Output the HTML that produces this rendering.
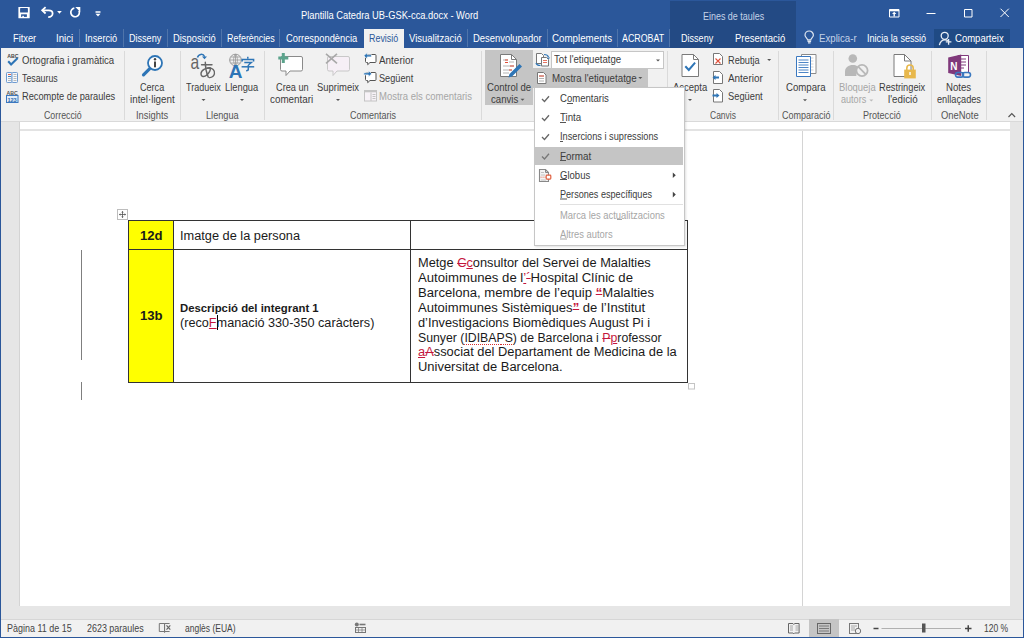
<!DOCTYPE html>
<html><head><meta charset="utf-8"><style>
html,body{margin:0;padding:0;width:1024px;height:638px;overflow:hidden;background:#e6e6e6;}
body{position:relative;font-family:"Liberation Sans",sans-serif;}
div,span,svg{position:absolute;box-sizing:border-box;}
#tx>span,#tx2>span{white-space:pre;transform-origin:0 0;}
.ins{position:static;color:#c4163c;text-decoration:underline;text-decoration-thickness:1px;text-underline-offset:1px}
.del{position:static;color:#c4163c;text-decoration:line-through;text-decoration-thickness:1px}
.sp{position:static;background:repeating-linear-gradient(90deg,#d83030 0 1px,transparent 1px 2px) 0 100%/100% 1px no-repeat}
</style></head><body>
<!-- title bar -->
<div style="left:0;top:0;width:1024px;height:48px;background:#2b579a"></div>
<div style="left:670px;top:1px;width:126px;height:47px;background:#234a84"></div>
<div style="left:934px;top:29px;width:76px;height:19px;background:#1f4a84"></div>
<div style="left:364px;top:29px;width:40px;height:19px;background:#f1f1f1"></div>
<!-- ribbon -->
<div style="left:1px;top:48px;width:1022px;height:73px;background:#f1f1f1"></div>
<div style="left:1px;top:121px;width:1022px;height:1px;background:#d9d9d9"></div>
<!-- page -->
<div style="left:19px;top:122px;width:991px;height:484px;background:#ffffff;border-left:1px solid #d4d4d4"></div>
<div style="left:20px;top:129px;width:990px;height:2px;background:#e3e3e3"></div>
<div style="left:802px;top:131px;width:1px;height:475px;background:#d4d4d4"></div>
<!-- status bar -->
<div style="left:1px;top:619px;width:1022px;height:18px;background:#f1f1f1;border-top:1px solid #d6d6d6"></div>
<div style="left:0;top:0;width:1px;height:638px;background:#2b579a"></div>
<div style="left:1023px;top:0;width:1px;height:638px;background:#2b579a"></div>
<div style="left:0;top:637px;width:1024px;height:1px;background:#2b579a"></div>
<!-- highlights -->
<div style="left:485px;top:50px;width:48px;height:55px;background:#c5c5c5"></div>
<div style="left:533px;top:68px;width:115px;height:20px;background:#c5c5c5"></div>
<div style="left:551px;top:51px;width:113px;height:18px;background:#fff;border:1px solid #c6c6c6"></div>
<!-- table -->
<div style="left:128px;top:220px;width:560px;height:163px;border:1px solid #333"></div>
<div style="left:129px;top:221px;width:44px;height:161px;background:#ffff00"></div>
<div style="left:173px;top:220px;width:1px;height:163px;background:#333"></div>
<div style="left:410px;top:220px;width:1px;height:163px;background:#333"></div>
<div style="left:128px;top:249px;width:560px;height:1px;background:#333"></div>
<div style="left:217px;top:315px;width:1px;height:15px;background:#000"></div>

<svg style="left:0;top:0" width="1024" height="638" viewBox="0 0 1024 638">
<!-- QAT -->
<g fill="none" stroke="#fff" stroke-width="1.5">
 <path d="M42.5 10.3h6.2c2.3 0 3.9 1.3 3.9 3.2s-1.8 3.6-4.4 3.6" stroke-width="1.8"/>
 <path d="M45.6 7.1l-3.4 3.2 3.4 3.2" stroke-width="1.8"/>
 <path d="M74.3 8.2A4.3 4.3 0 1 0 79 10.6" stroke-width="1.7"/>
 <path d="M95.5 12h5"/>
</g>
<rect x="18.4" y="7.1" width="11.3" height="11.2" rx="0.5" fill="#fff"/>
<rect x="20.1" y="8.1" width="7.8" height="4.4" rx="0.6" fill="#2b579a"/>
<rect x="21.1" y="14.3" width="5.8" height="2.6" fill="#2b579a"/>
<rect x="22.3" y="15.8" width="1.6" height="1.2" fill="#fff"/>
<path d="M75.3 7h5v5z" fill="#fff"/>
<path d="M57.1 11h4.7l-2.35 2.7z" fill="#fff"/>
<path d="M95.5 13.8h5l-2.5 2.8z" fill="#fff"/>
<!-- window controls -->
<g fill="none" stroke="#fff" stroke-width="1">
 <path d="M889.5 9.5h9.5v7.5h-9.5z"/>
 <path d="M926.5 13.5h9"/>
 <path d="M964.5 9.5h7.5v7.5h-7.5z"/>
 <path d="M1000.5 8.7l8.3 8.3M1008.8 8.7l-8.3 8.3"/>
</g>
<path d="M889.5 9.5h9.5v1.8h-9.5z" fill="#fff"/>
<path d="M894.2 11.8l-2.2 2.3h1.5v2.4h1.4v-2.4h1.5z" fill="#fff"/>
<!-- tab separators -->
<g fill="#4f74aa">
 <rect x="79" y="29" width="1" height="18"/><rect x="123" y="29" width="1" height="18"/>
 <rect x="167" y="29" width="1" height="18"/><rect x="221" y="29" width="1" height="18"/>
 <rect x="279" y="29" width="1" height="18"/><rect x="467" y="29" width="1" height="18"/>
 <rect x="547" y="29" width="1" height="18"/><rect x="617" y="29" width="1" height="18"/>
 <rect x="669" y="29" width="1" height="18"/>
</g>
<!-- bulb -->
<g fill="none" stroke="#dfe6f0" stroke-width="1.2">
 <path d="M807.6 39.8c-0.3-1.5-2.6-2.8-2.6-4.6a4.2 4.2 0 0 1 8.4 0c0 1.8-2.3 3.1-2.6 4.6z"/>
</g>
<path d="M807.5 40.4h3.6v1.6h-3.6zM808 42.2h2.6v1.4h-2.6z" fill="#dfe6f0"/>
<!-- person share -->
<g fill="none" stroke="#e8eef6" stroke-width="1.3">
 <circle cx="944.7" cy="35.8" r="3.5"/>
 <path d="M939.4 45.2c0.6-3 2.8-5.4 5.6-5.4 1.2 0 2.2 0.3 3 0.8"/>
 <path d="M945.8 41.8h5.6M948.6 39v5.8"/>
</g>
<!-- ribbon group separators -->
<g fill="#dadada">
 <rect x="124" y="51" width="1" height="69"/><rect x="180" y="51" width="1" height="69"/>
 <rect x="264" y="51" width="1" height="69"/><rect x="481" y="51" width="1" height="69"/>
 <rect x="667" y="51" width="1" height="69"/><rect x="778" y="51" width="1" height="69"/>
 <rect x="833" y="51" width="1" height="69"/><rect x="931" y="51" width="1" height="69"/>
 <rect x="986" y="51" width="1" height="69"/>
</g>
<!-- Ortografia icon -->
<text x="7.2" y="57.5" font-family="Liberation Sans" font-weight="700" font-size="5.2" fill="#444">ABC</text>
<path d="M8.2 61.3l2.9 3.2 6.6-6.4" fill="none" stroke="#2e75b6" stroke-width="2.1"/>
<!-- Tesaurus icon -->
<rect x="6.5" y="72.5" width="5.5" height="10" rx="0.8" fill="#f4f8fc" stroke="#6f9bd0"/>
<rect x="12" y="72.5" width="5.5" height="10" rx="0.8" fill="#f4f8fc" stroke="#6f9bd0"/>
<path d="M8 74.5h3" stroke="#e0503a" stroke-width="0.9"/><path d="M8 76.5h3" stroke="#2e75b6" stroke-width="0.9"/><path d="M8 78.5h3M8 80.5h3M13.5 74.5h3M13.5 76.5h3M13.5 78.5h3M13.5 80.5h3" stroke="#aaa" stroke-width="0.8"/>
<!-- Recompte icon -->
<text x="6.5" y="94.6" font-family="Liberation Sans" font-weight="700" font-size="5.2" fill="#555">ABC</text>
<rect x="6.5" y="95.5" width="11.5" height="7" fill="#e4eef8" stroke="#3a78c0"/>
<text x="7.4" y="101.6" font-family="Liberation Sans" font-weight="700" font-size="5.6" fill="#2e6bb0">123</text>
<!-- Cerca intel-ligent -->
<circle cx="155" cy="63" r="7" fill="#fff" stroke="#2e75b6" stroke-width="1.8"/>
<path d="M143.5 74.8l6-6" stroke="#2e75b6" stroke-width="3.2" stroke-linecap="round"/>
<circle cx="155" cy="59.3" r="1.2" fill="#444"/>
<rect x="154" y="61.5" width="2" height="5.8" fill="#444"/>
<!-- Tradueix -->
<text transform="translate(190.6 69.3) scale(0.78 1)" font-family="Liberation Sans" font-size="20" fill="#666">a</text>
<g fill="none" stroke="#666" stroke-width="1.4" stroke-linecap="round">
 <path d="M201.5 64.8H212"/>
 <path d="M205.3 62.2C205.3 67 206 72 208.3 77.2"/>
 <path d="M210.2 67.8C206 67.6 201 70.2 201 73.8C201 77 204.2 77.4 206.8 75C209.5 72.5 210.6 69.5 210.2 67.8"/>
 <path d="M207.6 68.2C212.6 67.4 215.2 70.6 214.4 73.8C213.7 76.5 211.4 77.4 209.6 77.6"/>
</g>
<path d="M197.5 57.5c0.8-3.5 5.5-4.5 7.2-0.8" fill="none" stroke="#2e75b6" stroke-width="1.5"/>
<path d="M202 56.4h5l-2.5 2.8z" fill="#2e75b6"/>
<!-- Llengua -->
<circle cx="235.5" cy="60" r="5.8" fill="none" stroke="#999" stroke-width="1"/>
<path d="M229.7 60h11.6M235.5 54.2v11.6M231 57h9M231 63h9" stroke="#999" stroke-width="0.8" fill="none"/>
<path d="M235.5 54.2c-2.5 2-2.5 9.6 0 11.6M235.5 54.2c2.5 2 2.5 9.6 0 11.6" stroke="#999" stroke-width="0.8" fill="none"/>
<text x="228.8" y="77.5" font-family="Liberation Sans" font-weight="700" font-size="19" fill="#2e75b6">A</text>
<g fill="none" stroke="#2e75b6" stroke-width="1.5">
 <path d="M247.8 56.8v2"/><path d="M242.2 61.6v-2.2h11.4v2.2"/>
 <path d="M244.3 62.6h7l-2.8 2.4"/><path d="M248.3 65v4.2c0 1.1-0.6 1.5-2.2 1.5"/><path d="M241.6 66.8h12.6"/>
</g>
<!-- dropdown arrows small -->
<g fill="#555">
 <path d="M201.5 99h4l-2 2z"/><path d="M240 99h4l-2 2z"/>
 <path d="M336 99h4l-2 2z"/><path d="M803 99.3h4l-2 2z"/>
 <path d="M767.2 59h4l-2 2z"/><path d="M656 59.5h4l-2 2z"/>
 <path d="M638.3 77h4l-2 2z"/><path d="M520.5 98.7h4l-2 2z"/>
 <path d="M688 99h4l-2 2z"/>
</g>
<path d="M869.3 99.5h4l-2 2z" fill="#bbb"/>
<!-- Crea un comentari -->
<path d="M282 56.5h19a1.5 1.5 0 0 1 1.5 1.5v11.5a1.5 1.5 0 0 1-1.5 1.5h-11l-4 4.5v-4.5h-4a1.5 1.5 0 0 1-1.5-1.5v-11.5a1.5 1.5 0 0 1 1.5-1.5z" fill="#fff" stroke="#8a8a8a"/>
<path d="M281.8 53h3v3.5h3.5v3h-3.5v3.5h-3v-3.5h-3.5v-3h3.5z" fill="#5ba38c"/>
<!-- Suprimeix -->
<path d="M329 56.5h19a1.5 1.5 0 0 1 1.5 1.5v11.5a1.5 1.5 0 0 1-1.5 1.5h-11l-4 4.5v-4.5h-4a1.5 1.5 0 0 1-1.5-1.5v-11.5a1.5 1.5 0 0 1 1.5-1.5z" fill="#f6eff6" stroke="#c8c8c8"/>
<path d="M326 53.8l11 9.6M337 53.8l-11 9.6" stroke="#a8a8a8" stroke-width="1.6"/>
<!-- Anterior / Seguent comment icons -->
<path d="M366.5 54.5h8.5a1 1 0 0 1 1 1v6a1 1 0 0 1-1 1h-5l-2.3 2.2v-2.2h-1.2a1 1 0 0 1-1-1v-6a1 1 0 0 1 1-1z" fill="#fff" stroke="#555"/>
<path d="M363.8 55.8l3.4-3.2v2.1h4.3v2.2h-4.3v2.1z" fill="#2e75b6" stroke="#fff" stroke-width="0.7"/>
<path d="M366.5 72.5h8.5a1 1 0 0 1 1 1v6a1 1 0 0 1-1 1h-5l-2.3 2.2v-2.2h-1.2a1 1 0 0 1-1-1v-6a1 1 0 0 1 1-1z" fill="#fff" stroke="#555"/>
<path d="M371.8 73.8l-3.4-3.2v2.1h-4.6v2.2h4.6v2.1z" fill="#2e75b6" stroke="#fff" stroke-width="0.7"/>
<!-- Mostra els comentaris icon -->
<rect x="364.5" y="90.5" width="12" height="10.5" fill="#f7f2f7" stroke="#c4c4c4"/>
<rect x="364.5" y="90.5" width="12" height="1.8" fill="#c4c4c4"/>
<path d="M371 92.5v8.5M372.5 94.5h3M372.5 96.5h3M372.5 98.5h3" stroke="#c4c4c4"/>
</svg>
<svg style="left:0;top:0" width="1024" height="638" viewBox="0 0 1024 638">
<!-- Control de canvis icon -->
<path d="M500.5 54.5h11l5 5v17h-16z" fill="#fff" stroke="#7a7a7a"/>
<path d="M511.5 54.5v5h5" fill="none" stroke="#7a7a7a"/>
<path d="M503 60h5M509 62h5M503 66h11M503 70h9M503 73h6" stroke="#aaa" stroke-width="0.9"/>
<path d="M505 60h3M505 62.5h3M510 66h4M509 70h3" stroke="#e0503a" stroke-width="1"/>
<path d="M508.5 77.5l1-3.5 10-10 2.5 2.5-10 10z" fill="#2e75b6"/>
<!-- Tot l'etiquetatge icon -->
<path d="M536.5 53.5h5l2 2v8h-7z" fill="#fff" stroke="#777"/>
<path d="M541.5 57.5h5l2 2v6.5h-7z" fill="#fff" stroke="#777"/>
<path d="M543 60.5h4M543 62.5h4" stroke="#e0503a" stroke-width="0.8"/>
<path d="M544 54.5c2.5 0 4 0.8 4.5 2.5" fill="none" stroke="#2e75b6" stroke-width="1.2"/>
<path d="M547 57.5h3.2l-1.6 1.8z" fill="#2e75b6"/>
<path d="M540.5 65.5c-2.5 0-4-0.8-4.5-2.5" fill="none" stroke="#2e75b6" stroke-width="1.2"/>
<!-- Mostra l'etiquetatge icon -->
<path d="M537.5 72.5h6l2.5 2.5v8.5h-8.5z" fill="#fff" stroke="#777"/>
<path d="M539 76h5M539 78.5h5M539 81h5" stroke="#aaa" stroke-width="0.9"/>
<path d="M539 76h5" stroke="#e0503a" stroke-width="1"/>
<!-- Accepta -->
<path d="M682 54.5h11.5l5 5v17h-16.5z" fill="#fff" stroke="#7a7a7a"/>
<path d="M693.5 54.5v5h5" fill="none" stroke="#7a7a7a"/>
<path d="M685.3 66.2l3.5 3.8 6.3-7.3" fill="none" stroke="#2e75b6" stroke-width="2"/>
<!-- Rebutja / Anterior / Seguent small docs -->
<path d="M713.5 53.5h6l3 3v8h-9z" fill="#fff" stroke="#777"/>
<path d="M715.5 58.5l5 5M720.5 58.5l-5 5" stroke="#e0503a" stroke-width="1.1"/>
<path d="M713.5 71.5h6l3 3v9h-9z" fill="#fff" stroke="#777"/>
<path d="M712.5 77.5l3-2.6v1.7h3.5v1.8h-3.5v1.7z" fill="#2e75b6"/>
<path d="M713.5 89.5h6l3 3v9.5h-9z" fill="#fff" stroke="#777"/>
<path d="M719.5 95.5l-3-2.6v1.7h-4v1.8h4v1.7z" fill="#2e75b6"/>
<!-- Compara -->
<path d="M801.5 54.5h14.5v19h-14.5z" fill="#fff" stroke="#8a8a8a"/>
<path d="M803.5 58h10M803.5 61h10M803.5 64h10M803.5 67h10M803.5 70h10" stroke="#c8c8c8" stroke-width="0.8"/>
<path d="M796.5 56.5h14v20h-14z" fill="#fff" stroke="#3a78c0"/>
<path d="M798.5 60h10M798.5 62.5h10M798.5 65h10M798.5 67.5h10M798.5 70h10M798.5 72.5h10" stroke="#3a78c0" stroke-width="0.9"/>
<!-- Bloqueja autors -->
<circle cx="852.8" cy="58.5" r="4.3" fill="#b8b8b8"/>
<path d="M845 76v-4.5c0-4 3.5-6.5 7.8-6.5 2 0 3.5 0.5 4.5 1.2l-1 9.8z" fill="#b8b8b8"/>
<circle cx="862" cy="70.5" r="5.6" fill="#f1f1f1" stroke="#b8b8b8" stroke-width="1.8"/>
<path d="M858.2 66.7l7.6 7.6" stroke="#b8b8b8" stroke-width="1.8"/>
<!-- Restringeix -->
<path d="M894 54.5h10.5l6.5 6.5v15.5h-17z" fill="#fff" stroke="#7a7a7a"/>
<path d="M904.5 54.5v6.5h6.5" fill="none" stroke="#7a7a7a"/>
<path d="M906.8 70v-1.8a3.2 3.2 0 0 1 6.4 0v1.8" fill="none" stroke="#e8b84c" stroke-width="1.6"/>
<rect x="904.2" y="69.6" width="11.6" height="8.8" fill="#e8b84c"/>
<rect x="909.3" y="72" width="1.4" height="3" fill="#fff"/>
<!-- OneNote -->
<path d="M958 55.5h10.5v17h-10.5z" fill="#fff" stroke="#80397b"/>
<path d="M960 59h6M960 62h6M960 65h6M960 68h4" stroke="#80397b" stroke-width="1"/>
<path d="M948.2 57.5l13-3v21.5l-13-3z" fill="#80397b"/>
<text x="950.2" y="70" font-family="Liberation Sans" font-weight="700" font-size="10" fill="#fff">N</text>
<g fill="none" stroke="#3a78c0" stroke-width="1.6">
 <rect x="955.5" y="72.5" width="8" height="4.6" rx="2.3"/>
 <rect x="962.5" y="72.5" width="8" height="4.6" rx="2.3"/>
</g>
<!-- collapse ribbon caret -->
<path d="M1008.5 117l3.3-3.3 3.3 3.3" fill="none" stroke="#555" stroke-width="1.2"/>
<!-- table move handle -->
<rect x="117.5" y="209.5" width="10" height="10" fill="#fff" stroke="#bdbdbd"/>
<path d="M122.5 211.5v6M119.5 214.5h6" stroke="#555" stroke-width="0.8"/>
<path d="M122.5 211l-1.2 1.4h2.4zM122.5 218l-1.2-1.4h2.4zM119 214.5l1.4-1.2v2.4zM126 214.5l-1.4-1.2v2.4z" fill="#555"/>
<!-- change bars -->
<rect x="81" y="250" width="1" height="110" fill="#7f7f7f"/>
<rect x="81" y="382" width="1" height="18" fill="#7f7f7f"/>
<!-- table resize handle -->
<rect x="688.5" y="383.5" width="6" height="5.5" fill="#fff" stroke="#c4c4c4"/>
<!-- status bar icons -->
<path d="M164.5 623.5h-5.2v8h5.2zM164.6 623.2v9.6M164.6 623.5h5M164.6 631.5h5" fill="none" stroke="#777" stroke-width="1"/>
<path d="M166.5 625.4l3.8 4.2M170.3 625.4l-3.8 4.2" stroke="#666" stroke-width="1.2"/>
<circle cx="356.8" cy="624.5" r="2" fill="#777"/>
<path d="M359.5 624.5h6" stroke="#777" stroke-width="1.6"/>
<rect x="355.5" y="627.5" width="10" height="5" fill="none" stroke="#777"/>
<path d="M355.5 630h10M358.5 627.5v5M362 627.5v5" stroke="#777" stroke-width="0.7"/>
<!-- read mode -->
<path d="M788.5 623.5h4.5l0.8 1 0.8-1h4.5v9.5h-4.5l-0.8 0.8-0.8-0.8h-4.5z" fill="none" stroke="#666"/>
<path d="M790 626h3M790 628h3M790 630h3M795.5 626h3M795.5 628h3M795.5 630h3" stroke="#888" stroke-width="0.7"/>
<rect x="809" y="619" width="30" height="18" fill="#c5c5c5"/>
<rect x="817.5" y="623.5" width="13" height="10" fill="none" stroke="#666"/>
<path d="M819 626h10M819 628.5h10M819 631h10" stroke="#666" stroke-width="0.8"/>
<rect x="849.5" y="623.5" width="9" height="10" fill="none" stroke="#777"/>
<path d="M851 626h6M851 628h4M851 630h4" stroke="#888" stroke-width="0.7"/>
<circle cx="858" cy="631" r="2.7" fill="#f1f1f1" stroke="#666" stroke-width="0.9"/>
<path d="M873.5 628.5h5" stroke="#444" stroke-width="1.5"/>
<rect x="881.5" y="628" width="79.5" height="1" fill="#b0b0b0"/>
<rect x="922" y="623.5" width="3.5" height="9" fill="#555"/>
<path d="M965 628.5h6.5M968.25 625.25v6.5" stroke="#444" stroke-width="1.5"/>
</svg>

<div id="tx">
<span id="t0" style="left:300.5px;top:9.77px;font-size:11.5px;line-height:11.5px;color:#ffffff;font-weight:400;transform:scaleX(0.8117);">Plantilla Catedra UB-GSK-cca.docx - Word</span>
<span id="t1" style="left:703px;top:10.61px;font-size:10.5px;line-height:10.5px;color:#c5d3e8;font-weight:400;transform:scaleX(0.8515);">Eines de taules</span>
<span id="t2" style="left:13px;top:32.69px;font-size:11px;line-height:11px;color:#ffffff;font-weight:400;transform:scaleX(0.8436);">Fitxer</span>
<span id="t3" style="left:56px;top:32.69px;font-size:11px;line-height:11px;color:#ffffff;font-weight:400;transform:scaleX(0.8792);">Inici</span>
<span id="t4" style="left:85px;top:32.69px;font-size:11px;line-height:11px;color:#ffffff;font-weight:400;transform:scaleX(0.8357);">Inserció</span>
<span id="t5" style="left:129px;top:32.69px;font-size:11px;line-height:11px;color:#ffffff;font-weight:400;transform:scaleX(0.8230);">Disseny</span>
<span id="t6" style="left:172.5px;top:32.69px;font-size:11px;line-height:11px;color:#ffffff;font-weight:400;transform:scaleX(0.8516);">Disposició</span>
<span id="t7" style="left:226.5px;top:32.69px;font-size:11px;line-height:11px;color:#ffffff;font-weight:400;transform:scaleX(0.8126);">Referències</span>
<span id="t8" style="left:286px;top:32.69px;font-size:11px;line-height:11px;color:#ffffff;font-weight:400;transform:scaleX(0.8498);">Correspondència</span>
<span id="t9" style="left:369px;top:32.69px;font-size:11px;line-height:11px;color:#2b579a;font-weight:400;transform:scaleX(0.8094);">Revisió</span>
<span id="t10" style="left:409px;top:32.69px;font-size:11px;line-height:11px;color:#ffffff;font-weight:400;transform:scaleX(0.8646);">Visualització</span>
<span id="t11" style="left:473px;top:32.69px;font-size:11px;line-height:11px;color:#ffffff;font-weight:400;transform:scaleX(0.8574);">Desenvolupador</span>
<span id="t12" style="left:552px;top:32.69px;font-size:11px;line-height:11px;color:#ffffff;font-weight:400;transform:scaleX(0.8871);">Complements</span>
<span id="t13" style="left:622px;top:32.69px;font-size:11px;line-height:11px;color:#ffffff;font-weight:400;transform:scaleX(0.8060);">ACROBAT</span>
<span id="t14" style="left:681px;top:32.69px;font-size:11px;line-height:11px;color:#ffffff;font-weight:400;transform:scaleX(0.8230);">Disseny</span>
<span id="t15" style="left:735px;top:32.69px;font-size:11px;line-height:11px;color:#ffffff;font-weight:400;transform:scaleX(0.8641);">Presentació</span>
<span id="t16" style="left:818.5px;top:32.69px;font-size:11px;line-height:11px;color:#c3d1e6;font-weight:400;transform:scaleX(0.8809);">Explica-r</span>
<span id="t17" style="left:866.5px;top:32.69px;font-size:11px;line-height:11px;color:#ffffff;font-weight:400;transform:scaleX(0.8274);">Inicia la sessió</span>
<span id="t18" style="left:955px;top:32.69px;font-size:11px;line-height:11px;color:#ffffff;font-weight:400;transform:scaleX(0.8658);">Comparteix</span>
<span id="t19" style="left:22px;top:54.69px;font-size:11px;line-height:11px;color:#3c3c3c;font-weight:400;transform:scaleX(0.8717);">Ortografia i gramàtica</span>
<span id="t20" style="left:22px;top:72.69px;font-size:11px;line-height:11px;color:#3c3c3c;font-weight:400;transform:scaleX(0.7997);">Tesaurus</span>
<span id="t21" style="left:22px;top:91.19px;font-size:11px;line-height:11px;color:#3c3c3c;font-weight:400;transform:scaleX(0.8420);">Recompte de paraules</span>
<span id="t22" style="left:43.75px;top:109.99px;font-size:11px;line-height:11px;color:#555555;font-weight:400;transform:scaleX(0.8008);">Correcció</span>
<span id="t23" style="left:140px;top:81.69px;font-size:11px;line-height:11px;color:#3c3c3c;font-weight:400;transform:scaleX(0.8247);">Cerca</span>
<span id="t24" style="left:129.5px;top:94.19px;font-size:11px;line-height:11px;color:#3c3c3c;font-weight:400;transform:scaleX(0.8915);">intel·ligent</span>
<span id="t25" style="left:136px;top:109.99px;font-size:11px;line-height:11px;color:#555555;font-weight:400;transform:scaleX(0.8491);">Insights</span>
<span id="t26" style="left:185.5px;top:81.69px;font-size:11px;line-height:11px;color:#3c3c3c;font-weight:400;transform:scaleX(0.8186);">Tradueix</span>
<span id="t27" style="left:225px;top:81.69px;font-size:11px;line-height:11px;color:#3c3c3c;font-weight:400;transform:scaleX(0.8479);">Llengua</span>
<span id="t28" style="left:205.5px;top:109.99px;font-size:11px;line-height:11px;color:#555555;font-weight:400;transform:scaleX(0.8351);">Llengua</span>
<span id="t29" style="left:275.5px;top:81.69px;font-size:11px;line-height:11px;color:#3c3c3c;font-weight:400;transform:scaleX(0.8354);">Crea un</span>
<span id="t30" style="left:270px;top:94.19px;font-size:11px;line-height:11px;color:#3c3c3c;font-weight:400;transform:scaleX(0.8945);">comentari</span>
<span id="t31" style="left:316.75px;top:81.69px;font-size:11px;line-height:11px;color:#3c3c3c;font-weight:400;transform:scaleX(0.8578);">Suprimeix</span>
<span id="t32" style="left:379px;top:54.69px;font-size:11px;line-height:11px;color:#3c3c3c;font-weight:400;transform:scaleX(0.9006);">Anterior</span>
<span id="t33" style="left:379px;top:72.69px;font-size:11px;line-height:11px;color:#3c3c3c;font-weight:400;transform:scaleX(0.8345);">Següent</span>
<span id="t34" style="left:379px;top:91.19px;font-size:11px;line-height:11px;color:#a6a6a6;font-weight:400;transform:scaleX(0.8639);">Mostra els comentaris</span>
<span id="t35" style="left:349.75px;top:109.99px;font-size:11px;line-height:11px;color:#555555;font-weight:400;transform:scaleX(0.8169);">Comentaris</span>
<span id="t36" style="left:487px;top:81.69px;font-size:11px;line-height:11px;color:#3c3c3c;font-weight:400;transform:scaleX(0.8707);">Control de</span>
<span id="t37" style="left:491px;top:94.19px;font-size:11px;line-height:11px;color:#3c3c3c;font-weight:400;transform:scaleX(0.8721);">canvis</span>
<span id="t38" style="left:554px;top:54.19px;font-size:11px;line-height:11px;color:#3c3c3c;font-weight:400;transform:scaleX(0.8759);">Tot l&#x27;etiquetatge</span>
<span id="t39" style="left:551.5px;top:72.69px;font-size:11px;line-height:11px;color:#3c3c3c;font-weight:400;transform:scaleX(0.8855);">Mostra l&#x27;etiquetatge</span>
<span id="t40" style="left:673px;top:81.69px;font-size:11px;line-height:11px;color:#3c3c3c;font-weight:400;transform:scaleX(0.8604);">Accepta</span>
<span id="t41" style="left:727.5px;top:54.69px;font-size:11px;line-height:11px;color:#3c3c3c;font-weight:400;transform:scaleX(0.8359);">Rebutja</span>
<span id="t42" style="left:727.5px;top:72.69px;font-size:11px;line-height:11px;color:#3c3c3c;font-weight:400;transform:scaleX(0.9006);">Anterior</span>
<span id="t43" style="left:727.5px;top:91.19px;font-size:11px;line-height:11px;color:#3c3c3c;font-weight:400;transform:scaleX(0.8467);">Següent</span>
<span id="t44" style="left:710px;top:109.99px;font-size:11px;line-height:11px;color:#555555;font-weight:400;transform:scaleX(0.7717);">Canvis</span>
<span id="t45" style="left:785.5px;top:81.69px;font-size:11px;line-height:11px;color:#3c3c3c;font-weight:400;transform:scaleX(0.8773);">Compara</span>
<span id="t46" style="left:781.75px;top:109.99px;font-size:11px;line-height:11px;color:#555555;font-weight:400;transform:scaleX(0.8169);">Comparació</span>
<span id="t47" style="left:838.5px;top:81.69px;font-size:11px;line-height:11px;color:#a6a6a6;font-weight:400;transform:scaleX(0.8569);">Bloqueja</span>
<span id="t48" style="left:841px;top:94.19px;font-size:11px;line-height:11px;color:#a6a6a6;font-weight:400;transform:scaleX(0.8241);">autors</span>
<span id="t49" style="left:879px;top:81.69px;font-size:11px;line-height:11px;color:#3c3c3c;font-weight:400;transform:scaleX(0.8395);">Restringeix</span>
<span id="t50" style="left:887.5px;top:94.19px;font-size:11px;line-height:11px;color:#3c3c3c;font-weight:400;transform:scaleX(0.8920);">l&#x27;edició</span>
<span id="t51" style="left:863px;top:109.99px;font-size:11px;line-height:11px;color:#555555;font-weight:400;transform:scaleX(0.8221);">Protecció</span>
<span id="t52" style="left:946px;top:81.69px;font-size:11px;line-height:11px;color:#3c3c3c;font-weight:400;transform:scaleX(0.8765);">Notes</span>
<span id="t53" style="left:936.75px;top:94.19px;font-size:11px;line-height:11px;color:#3c3c3c;font-weight:400;transform:scaleX(0.8357);">enllaçades</span>
<span id="t54" style="left:940.5px;top:109.99px;font-size:11px;line-height:11px;color:#555555;font-weight:400;transform:scaleX(0.8562);">OneNote</span>
<span id="t55" style="left:140px;top:229.72px;font-size:12.5px;line-height:12.5px;color:#1a1a1a;font-weight:700;transform:scaleX(1.0512);">12d</span>
<span id="t56" style="left:180px;top:229.72px;font-size:12.5px;line-height:12.5px;color:#1a1a1a;font-weight:400;transform:scaleX(1.0221);">Imatge de la persona</span>
<span id="t57" style="left:140px;top:310.22px;font-size:12.5px;line-height:12.5px;color:#1a1a1a;font-weight:700;transform:scaleX(1.0512);">13b</span>
<span id="t58" style="left:180px;top:303.11px;font-size:10.5px;line-height:10.5px;color:#1a1a1a;font-weight:700;transform:scaleX(1.0800);">Descripció del integrant 1</span>
<span id="t59" style="left:180px;top:316.62px;font-size:12.5px;line-height:12.5px;color:#1a1a1a;font-weight:400;transform:scaleX(1.0135);">(reco<span class="ins">F</span>manació 330-350 caràcters)</span>
<span id="t60" style="left:418.3px;top:257.02px;font-size:12.5px;line-height:12.5px;color:#1a1a1a;font-weight:400;transform:scaleX(1.0240);">Metge <span class="del">C</span><span class="ins">c</span>onsultor del Servei de Malalties</span>
<span id="t61" style="left:418.3px;top:272.02px;font-size:12.5px;line-height:12.5px;color:#1a1a1a;font-weight:400;transform:scaleX(1.0522);">Autoimmunes de l<span class="ins">’</span><span class="del">´</span>Hospital Clínic de</span>
<span id="t62" style="left:418.3px;top:287.12px;font-size:12.5px;line-height:12.5px;color:#1a1a1a;font-weight:400;transform:scaleX(1.0481);">Barcelona, membre de l’equip <span class="ins" style="font-weight:700;text-underline-offset:-3px">“</span>Malalties</span>
<span id="t63" style="left:418.3px;top:302.32px;font-size:12.5px;line-height:12.5px;color:#1a1a1a;font-weight:400;transform:scaleX(1.0450);">Autoimmunes Sistèmiques<span class="ins" style="font-weight:700;text-underline-offset:-3px">”</span> de l’Institut</span>
<span id="t64" style="left:418.3px;top:316.72px;font-size:12.5px;line-height:12.5px;color:#1a1a1a;font-weight:400;transform:scaleX(1.0213);">d’Investigacions Biomèdiques August Pi i</span>
<span id="t65" style="left:418.3px;top:331.82px;font-size:12.5px;line-height:12.5px;color:#1a1a1a;font-weight:400;transform:scaleX(0.9822);">Sunyer (<span class="sp">IDIBAPS</span>) de Barcelona i <span class="del">P</span><span class="ins">p</span>rofessor</span>
<span id="t66" style="left:418.3px;top:346.32px;font-size:12.5px;line-height:12.5px;color:#1a1a1a;font-weight:400;transform:scaleX(1.0282);"><span class="ins">a</span><span class="del">A</span>ssociat del Departament de Medicina de la</span>
<span id="t67" style="left:418.3px;top:360.52px;font-size:12.5px;line-height:12.5px;color:#1a1a1a;font-weight:400;transform:scaleX(1.0358);">Universitat de Barcelona.</span>
<span id="t76" style="left:7px;top:623.11px;font-size:10.5px;line-height:10.5px;color:#444444;font-weight:400;transform:scaleX(0.8538);">Pàgina 11 de 15</span>
<span id="t77" style="left:87px;top:623.11px;font-size:10.5px;line-height:10.5px;color:#444444;font-weight:400;transform:scaleX(0.8511);">2623 paraules</span>
<span id="t78" style="left:185px;top:623.11px;font-size:10.5px;line-height:10.5px;color:#444444;font-weight:400;transform:scaleX(0.8110);">anglès (EUA)</span>
<span id="t79" style="left:984px;top:623.11px;font-size:10.5px;line-height:10.5px;color:#444444;font-weight:400;transform:scaleX(0.8109);">120 %</span>
</div>
<div style="left:534px;top:87px;width:151px;height:159px;background:#fff;border:1px solid #c6c6c6;box-shadow:1px 1px 2px rgba(0,0,0,.12);z-index:10"></div>
<div style="left:535px;top:147px;width:148px;height:18px;background:#c5c5c5;z-index:10"></div>
<svg style="left:0;top:0;z-index:10" width="1024" height="638" viewBox="0 0 1024 638">
<g fill="none" stroke="#666" stroke-width="1.3">
 <path d="M542 99l2.5 2.5 4.5-5.2"/>
 <path d="M542 118l2.5 2.5 4.5-5.2"/>
 <path d="M542 137l2.5 2.5 4.5-5.2"/>
 <path d="M542 156.5l2.5 2.5 4.5-5.2" stroke="#777"/>
</g>
<path d="M672.8 172.5l3 2.8-3 2.8z M672.8 191.8l3 2.8-3 2.8z" fill="#444"/>
<rect x="560" y="204" width="123" height="1" fill="#e1e1e1"/>
<!-- globus icon -->
<path d="M539.5 169.5h6l3 3v9h-9z" fill="#f4f4f4" stroke="#888" stroke-width="1.1"/>
<path d="M545.5 169.5v3h3" fill="none" stroke="#888" stroke-width="1"/>
<path d="M541 172.5h3M541 175h4M541 180h5" stroke="#bbb" stroke-width="0.9"/>
<path d="M540.5 177.2h5.5" stroke="#e8765a" stroke-width="0.9" stroke-dasharray="1.2 0.8"/>
<rect x="546.2" y="175.2" width="4.6" height="3.9" rx="0.8" fill="#fff" stroke="#e06040" stroke-width="1.2"/>
<!-- mnemonic underlines -->
<g fill="#555">
 <rect x="567" y="103" width="6" height="1"/>
 <rect x="560" y="122" width="6" height="1"/>
 <rect x="560" y="141" width="3" height="1"/>
 <rect x="560" y="160" width="6" height="1"/>
 <rect x="560" y="179" width="7" height="1"/>
 <rect x="560" y="198.5" width="7" height="1"/>
</g>
<g fill="#a6a6a6">
 <rect x="617" y="219" width="5" height="1"/>
 <rect x="560" y="238.5" width="7" height="1"/>
</g>
</svg>

<div id="tx2" style="left:0;top:0;z-index:11">
<span id="t68" style="left:560px;top:93.19px;font-size:11px;line-height:11px;color:#3c3c3c;font-weight:400;transform:scaleX(0.8693);">Comentaris</span>
<span id="t69" style="left:560px;top:112.19px;font-size:11px;line-height:11px;color:#3c3c3c;font-weight:400;transform:scaleX(0.8816);">Tinta</span>
<span id="t70" style="left:560px;top:131.19px;font-size:11px;line-height:11px;color:#3c3c3c;font-weight:400;transform:scaleX(0.8365);">Insercions i supressions</span>
<span id="t71" style="left:560px;top:150.69px;font-size:11px;line-height:11px;color:#3c3c3c;font-weight:400;transform:scaleX(0.8954);">Format</span>
<span id="t72" style="left:560px;top:169.69px;font-size:11px;line-height:11px;color:#3c3c3c;font-weight:400;transform:scaleX(0.8663);">Globus</span>
<span id="t73" style="left:560px;top:189.19px;font-size:11px;line-height:11px;color:#3c3c3c;font-weight:400;transform:scaleX(0.8266);">Persones específiques</span>
<span id="t74" style="left:560px;top:209.69px;font-size:11px;line-height:11px;color:#a6a6a6;font-weight:400;transform:scaleX(0.8528);">Marca les actualitzacions</span>
<span id="t75" style="left:560px;top:229.19px;font-size:11px;line-height:11px;color:#a6a6a6;font-weight:400;transform:scaleX(0.8518);">Altres autors</span>
</div>
</body></html>
